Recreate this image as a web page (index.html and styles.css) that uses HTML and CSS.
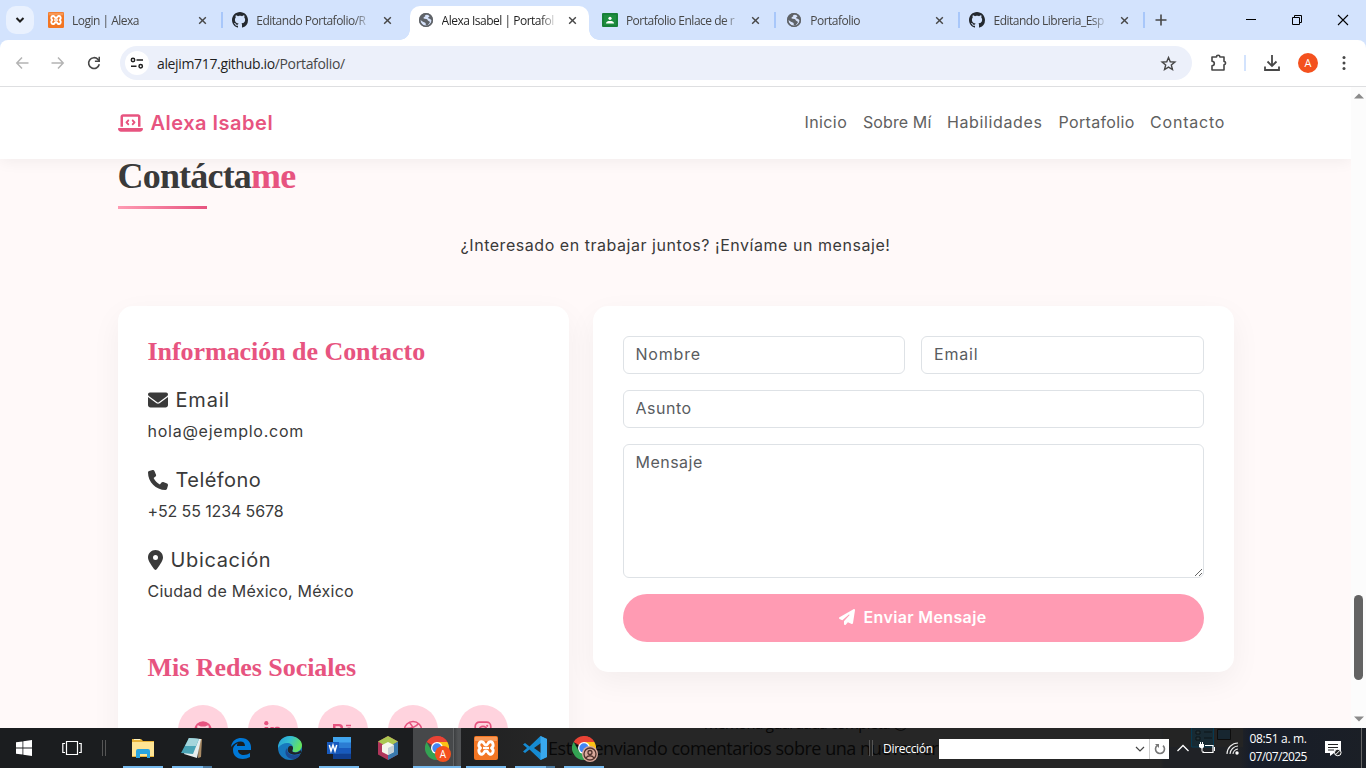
FILE: index.html
```html
<!DOCTYPE html>
<html lang="es">
<head>
<meta charset="utf-8">
<title>Alexa Isabel | Portafolio</title>
<link rel="stylesheet" href="styles.css">
</head>
<body>
<svg class="defs" aria-hidden="true">
  <symbol id="close" viewBox="0 0 10 10"><path d="M1.3 1.3l7.4 7.4M8.7 1.3L1.3 8.7" stroke="currentColor" stroke-width="1.6" fill="none"/></symbol>
  <symbol id="github" viewBox="0 0 16 16"><path d="M8 0C3.58 0 0 3.58 0 8c0 3.54 2.29 6.53 5.47 7.59.4.07.55-.17.55-.38 0-.19-.01-.82-.01-1.49-2.01.37-2.53-.49-2.69-.94-.09-.23-.48-.94-.82-1.13-.28-.15-.68-.52-.01-.53.63-.01 1.08.58 1.23.82.72 1.21 1.87.87 2.33.66.07-.52.28-.87.51-1.07-1.78-.2-3.64-.89-3.64-3.95 0-.87.31-1.59.82-2.15-.08-.2-.36-1.02.08-2.12 0 0 .67-.21 2.2.82.64-.18 1.32-.27 2-.27.68 0 1.36.09 2 .27 1.53-1.04 2.2-.82 2.2-.82.44 1.1.16 1.92.08 2.12.51.56.82 1.27.82 2.15 0 3.07-1.87 3.75-3.65 3.95.29.25.54.73.54 1.48 0 1.07-.01 1.93-.01 2.2 0 .21.15.46.55.38A8.013 8.013 0 0 0 16 8c0-4.42-3.58-8-8-8z" fill="currentColor"/></symbol>
  <symbol id="globe" viewBox="0 0 16 16"><circle cx="8" cy="8" r="7" fill="#5f6368"/><path d="M9.3 2.2C7 2.500 6.800 3.800 7.300 4.600c-1.500.1-2 .9-1.600 2 .6.700 3.700.2 3.900 1.500.1 1.100 1.700.8 2.200 1.900.2.800-.7 1.800-1.900 2.900-.6.500-1.500.6-2 .3-.4-1 .2-2-.7-2.500C5.500 10.100 4.700 9.800 2.300 7.800c-.2 2.600 1.500 5.400 4.600 6l1 .1c3.300-.2 5.800-2.700 5.900-6-.6 0-1.200-.2-1.600-.8-.7-.6-2.200-.3-2.100-1.300.1-.8 1.500-.7 1.300-1.800-.1-.7-.9-.8-2.100-1.800z" fill="#d7e3fb"/><circle cx="8" cy="8" r="6.300" fill="none" stroke="#5f6368" stroke-width="1.500"/></symbol>
  <symbol id="xampp" viewBox="0 0 24 24"><rect width="24" height="24" rx="2" fill="#f37623"/><path d="M1 1h22v4H1z" fill="#f9a66c" opacity=".7"/><path d="M8.500 6C5 5 3.500 10 6.500 12 3.500 14 5 19 8.500 18c2-.5 1-3 3.500-3s1.500 2.500 3.500 3c3.500 1 5-4 2-6 3-2 1.500-7-2-6-2 .5-1 3-3.500 3S10.500 6.500 8.500 6z" fill="none" stroke="#fff" stroke-width="2.900" stroke-linejoin="round"/><path d="M9 12h6" stroke="#fff" stroke-width="2.300"/></symbol>
  <symbol id="chrome" viewBox="0 0 24 24"><path d="M12 12L1.600 6A12 12 0 0 1 22.400 6z" fill="#e94335"/><path d="M12 0a12 12 0 0 1 10.400 6H12z" fill="#e94335"/><path d="M22.400 6A12 12 0 0 1 12 24l5.200-9L12 6z" fill="#fbc116"/><path d="M12 24A12 12 0 0 1 1.600 6l5.200 9 9.500.5z" fill="#34a353"/><circle cx="12" cy="12" r="6" fill="#fff"/><circle cx="12" cy="12" r="4.700" fill="#4285f4"/></symbol>
</svg>

<div class="tabstrip">
  <div class="tab-search"><svg width="10" height="8" viewBox="0 0 10 8"><path d="M1.500 2L5 5.500 8.500 2" fill="none" stroke="#1f1f1f" stroke-width="2"/></svg></div>
  <div class="tabs">
    <div class="tab"><svg class="fav"><use href="#xampp"/></svg><span class="tab-name">Login | Alexa</span><svg class="x"><use href="#close"/></svg></div>
    <div class="tab sep"><svg class="fav dark"><use href="#github"/></svg><span class="tab-name">Editando Portafolio/R</span><svg class="x"><use href="#close"/></svg></div>
    <div class="tab active"><svg class="fav"><use href="#globe"/></svg><span class="tab-name">Alexa Isabel | Portafol</span><svg class="x"><use href="#close"/></svg></div>
    <div class="tab late"><svg class="fav" viewBox="0 0 16 16"><rect y="1" width="16" height="14" rx="1" fill="#188038"/><path d="M2 3h12v10H2z" fill="#1e8e3e"/><circle cx="8" cy="6.300" r="1.600" fill="#fff"/><path d="M4 11.500c0-2 2-2.500 4-2.500s4 .5 4 2.500z" fill="#fff"/></svg><span class="tab-name">Portafolio Enlace de r</span><svg class="x"><use href="#close"/></svg></div>
    <div class="tab sep late"><svg class="fav"><use href="#globe"/></svg><span class="tab-name">Portafolio</span><svg class="x"><use href="#close"/></svg></div>
    <div class="tab sep"><svg class="fav dark"><use href="#github"/></svg><span class="tab-name">Editando Libreria_Esp</span><svg class="x"><use href="#close"/></svg></div>
  </div>
  <div class="new-tab"><svg width="12" height="12" viewBox="0 0 12 12"><path d="M6 .5v11M.5 6h11" stroke="#474747" stroke-width="1.600"/></svg></div>
  <div class="window-btns">
    <svg width="12" height="12" viewBox="0 0 12 12"><path d="M1 5.500h10" stroke="#000"/></svg>
    <svg width="12" height="12" viewBox="0 0 12 12"><path d="M1.500 3.500h7v7h-7zM3.500 3.500v-2h7v7h-2" fill="none" stroke="#000"/></svg>
    <svg width="12" height="12" viewBox="0 0 12 12"><path d="M1 1l10 10M11 1L1 11" stroke="#000" stroke-width="1.100"/></svg>
  </div>
</div>

<div class="toolbar">
  <div class="nav-btns">
    <svg width="14" height="14" viewBox="0 0 14 14"><path d="M7 1.500L1.800 7 7 12.500M2 7h11.500" fill="none" stroke="#b4b4b4" stroke-width="1.500"/></svg>
    <svg width="14" height="14" viewBox="0 0 14 14"><path d="M7 1.500L12.200 7 7 12.500M12 7H.5" fill="none" stroke="#b4b4b4" stroke-width="1.500"/></svg>
    <svg width="14" height="14" viewBox="0 0 14 14"><path d="M12.300 8.300A5.400 5.400 0 1 1 11 3.400L12.400 5" fill="none" stroke="#474747" stroke-width="1.600"/><path d="M13 .8v5.100H7.900V4.400h3.600V.8z" fill="#474747"/></svg>
  </div>
  <div class="omnibox">
    <div class="site-info"><svg width="14" height="12" viewBox="0 0 14 12"><g fill="none" stroke="#1f1f1f" stroke-width="1.500"><circle cx="3" cy="3" r="1.700"/><path d="M6.500 3H13M1 9.200h5.500"/><circle cx="10.700" cy="9.200" r="1.700"/></g></svg></div>
    <div class="url"><span>alejim717.github.io</span>/Portafolio/</div>
    <svg class="star" viewBox="0 0 24 24"><path d="M12 3.500l2.500 6 6.500.5-5 4.200 1.600 6.400L12 17.200l-5.600 3.400L8 14.200 3 10l6.500-.5z" fill="none" stroke="#474747" stroke-width="2"/></svg>
  </div>
  <div class="tool-icons">
    <svg width="18" height="18" viewBox="0 0 18 18"><path d="M2 3h4.500a1.700 1.700 0 0 1 3.400 0H14v4.500a1.600 1.600 0 0 1 0 3.200V16H2v-4.200c1.500 0 2.300-1 2.300-2.200S3.500 7.300 2 7.300z" fill="none" stroke="#474747" stroke-width="1.600" stroke-linejoin="round"/></svg>
    <i class="tool-sep"></i>
    <svg width="18" height="18" viewBox="0 0 18 18"><path d="M9 1v11M4.500 7.500L9 12l4.500-4.500M2 12.500V16h14v-3.500" fill="none" stroke="#474747" stroke-width="1.800"/></svg>
    <span class="avatar">A</span>
    <svg class="menu" width="4" height="16" viewBox="0 0 4 16"><g fill="#474747"><circle cx="2" cy="2.500" r="1.500"/><circle cx="2" cy="8" r="1.500"/><circle cx="2" cy="13.500" r="1.500"/></g></svg>
  </div>
</div>

<div class="viewport">
  <div class="page">
    <nav class="navbar">
      <div class="brand"><svg width="25" height="20" viewBox="0 0 640 512"><path fill="currentColor" d="M64 96c0-35.300 28.700-64 64-64H512c35.300 0 64 28.700 64 64V352H512V96H128V352H64V96zM0 403.200C0 392.600 8.600 384 19.200 384H620.800c10.600 0 19.200 8.600 19.200 19.200c0 42.400-34.400 76.800-76.800 76.800H76.800C34.400 480 0 445.600 0 403.200zM281 209l-31 31 31 31c9.400 9.400 9.400 24.600 0 33.900s-24.600 9.400-33.900 0l-48-48c-9.400-9.400-9.400-24.600 0-33.900l48-48c9.400-9.400 24.600-9.400 33.900 0s9.400 24.600 0 33.900zM393 175l48 48c9.400 9.400 9.400 24.600 0 33.900l-48 48c-9.400 9.400-24.600 9.400-33.900 0s-9.400-24.600 0-33.900l31-31-31-31c-9.400-9.400-9.400-24.600 0-33.900s24.600-9.400 33.900 0z"/></svg><span>Alexa Isabel</span></div>
      <div class="links"><a class="l-inicio">Inicio</a><a class="l-sobre">Sobre Mí</a><a class="l-hab">Habilidades</a><a class="l-port">Portafolio</a><a class="l-cont">Contacto</a></div>
    </nav>
    <main class="contact">
      <h2 class="title">Contácta<span>me</span></h2>
      <p class="lead">¿Interesado en trabajar juntos? ¡Envíame un mensaje!</p>
      <div class="cols">
        <section class="card info">
          <h3 class="h-info">Información de Contacto</h3>
          <div class="item"><h5><svg width="20" height="20" viewBox="0 0 512 512"><path d="M48 64C21.500 64 0 85.500 0 112c0 15.100 7.100 29.300 19.200 38.400L236.800 313.600c11.400 8.500 27 8.500 38.400 0L492.800 150.400c12.100-9.100 19.200-23.300 19.200-38.400c0-26.500-21.500-48-48-48H48zM0 176V384c0 35.300 28.700 64 64 64H448c35.300 0 64-28.700 64-64V176L294.400 339.200c-22.800 17.100-54 17.100-76.800 0L0 176z"/></svg><span class="t-mail">Email</span></h5><p class="p-mail">hola@ejemplo.com</p></div>
          <div class="item"><h5><svg width="20" height="20" viewBox="0 0 512 512"><path d="M164.900 24.600c-7.700-18.600-28-28.500-47.400-23.200l-88 24C12.100 30.200 0 46 0 64C0 311.400 200.600 512 448 512c18 0 33.800-12.100 38.600-29.500l24-88c5.300-19.400-4.600-39.700-23.200-47.400l-96-40c-16.300-6.800-35.200-2.100-46.300 11.600L304.700 368C234.300 334.700 177.300 277.700 144 207.300L193.300 167c13.700-11.200 18.400-30 11.600-46.300l-40-96z"/></svg><span class="t-tel">Teléfono</span></h5><p class="p-tel">+52 55 1234 5678</p></div>
          <div class="item"><h5><svg width="15" height="20" viewBox="0 0 384 512"><path d="M215.700 499.200C267 435 384 279.400 384 192C384 86 298 0 192 0S0 86 0 192c0 87.400 117 243 168.300 307.200c12.300 15.300 35.100 15.300 47.400 0zM192 128a64 64 0 1 1 0 128 64 64 0 1 1 0-128z"/></svg><span class="t-ubi">Ubicación</span></h5><p class="p-ubi">Ciudad de México, México</p></div>
          <h3 class="h-redes">Mis Redes Sociales</h3>
          <div class="social">
            <span><svg viewBox="0 0 20 20"><circle cx="10" cy="10" r="8.700" fill="currentColor"/><path d="M4.500 5.500c1.700-.2 2.700.7 3.200 1h4.600c.5-.3 1.500-1.200 3.200-1 .5 1.500.2 2.500 0 3 1.500 3.500-.5 6-5.500 6s-7-2.500-5.500-6c-.2-.5-.5-1.500 0-3z" fill="#ffd3de"/></svg></span>
            <span><svg viewBox="0 0 20 20"><circle cx="3.300" cy="3.200" r="2.100" fill="currentColor"/><path d="M1.600 7h3.600v11H1.600zM7.400 7h3.400v1.500c2-3 7.700-2.500 7.700 3V18H15v-6c0-3-4-3-4 0v6H7.400z" fill="currentColor"/></svg></span>
            <span><svg viewBox="0 0 20 20"><path d="M0 4h6c5 0 5 5 2 6 4 1 3.500 7-2 7H0zM2.500 6.200v3H6c2 0 2-3 0-3zM2.500 11v3.700H6c2.500 0 2.500-3.700 0-3.700z" fill="currentColor" fill-rule="evenodd"/><path d="M13 5.500h5" stroke="currentColor" stroke-width="1.500"/><path d="M12.500 13h7c0-6-7-6-7 0 0 5 6 4 7 1.500" fill="none" stroke="currentColor" stroke-width="2"/></svg></span>
            <span><svg viewBox="0 0 20 20"><g fill="none" stroke="currentColor" stroke-width="1.500"><circle cx="10" cy="10" r="8.600"/><path d="M6.500 2.500c3.500 4 5.500 9 6.500 15M1.500 8.500c6 .2 11-1 14-5M4 16c2.500-5 8-6.500 14.500-5"/></g></svg></span>
            <span><svg viewBox="0 0 20 20"><rect x="2.200" y="2.200" width="15.600" height="15.600" rx="4.200" fill="none" stroke="currentColor" stroke-width="1.700"/><circle cx="10" cy="10" r="3.700" fill="none" stroke="currentColor" stroke-width="1.700"/><circle cx="14.200" cy="5.800" r="1.100" fill="currentColor"/></svg></span>
          </div>
        </section>
        <form class="card form">
          <div class="pair"><input type="text" placeholder="Nombre"><input type="text" placeholder="Email"></div>
          <input class="subject" type="text" placeholder="Asunto">
          <textarea placeholder="Mensaje"></textarea>
          <button type="button"><svg width="16" height="16" viewBox="0 0 512 512"><path fill="#fff" d="M498.100 5.600c10.100 7 15.400 19.100 13.500 31.200l-64 416c-1.500 9.700-7.400 18.200-16 23s-18.900 5.400-28 1.600L284 427.700l-68.500 74.100c-8.900 9.700-22.900 12.900-35.200 8.100S160 493.200 160 480V396.400c0-4 1.500-7.800 4.200-10.700L331.800 202.800c5.800-6.300 5.600-16-.4-22s-15.700-6.400-22-.7L106 360.800 17.700 316.600C7.100 311.300 .3 300.700 0 288.900s5.900-22.800 16.100-28.700l448-256c10.700-6.100 23.900-5.500 34 1.400z"/></svg><span>Enviar Mensaje</span></button>
        </form>
      </div>
    </main>
  </div>
  <div class="scrollbar"><svg width="10" height="6" viewBox="0 0 10 6"><path d="M0 5.500L5 .5l5 5z" fill="#8a8a8a"/></svg><i></i><svg width="10" height="6" viewBox="0 0 10 6"><path d="M0 .5l5 5 5-5z" fill="#8a8a8a"/></svg></div>
</div>

<div class="taskbar">
  <div class="ghost ghost-main">Estás enviando comentarios sobre una nueva vers</div>
  <div class="ghost ghost-top">memoria guardada completa ⓘ</div>
  <div class="ghost ghost-low">Está</div>
  <svg class="ghost-panel" width="80" height="20" viewBox="0 0 80 20"><path d="M0 0h80v19H0z" fill="#242424"/><path d="M28.500-1h22v20h-22z" fill="#182a33" stroke="#063a52"/><path d="M33 3h4v3h-4zM33 9h4v3h-4zM41 4h8M41 10h8" stroke="#0c1418" fill="#28363b"/><path d="M54.500 1.500h13v10h-13z" fill="#172630" stroke="#0d0d0d"/></svg>
  <div class="start"><svg width="16" height="16" viewBox="0 0 16 16"><path d="M0 2.300L6.500 1.400v6.200H0zM7.300 1.300L16 0v7.600H7.300zM0 8.400h6.500v6.200L0 13.700zM7.300 8.400H16V16l-8.700-1.300z" fill="#fff"/></svg></div>
  <div class="start"><svg width="20" height="14" viewBox="0 0 20 14"><path d="M4.500.5h11v13h-11zM3 2.500H.8v9H3M17 2.500h2.200v9H17" fill="none" stroke="#fff" stroke-width="1.200"/></svg></div>
  <div class="grip"></div>
  <div class="apps">
    <div class="app on"><svg viewBox="0 0 24 24"><path d="M1 3h9l2 2h11v16H1z" fill="#e8b339"/><path d="M1 6h22v14H1z" fill="#ffe594"/><path d="M3 3.500h6" stroke="#fff3c2"/><path d="M5 22v-7q0-2 2-2h10q2 0 2 2v7h-3v-4H9v4z" fill="#2ba5df"/></svg></div>
    <div class="app on more"><svg viewBox="0 0 24 24"><path d="M19 3h3l-1 18-3 1z" fill="#a98b65"/><path d="M9 2l12 1-4 19-13-4z" fill="#e7eeee"/><path d="M9 2l10 1-6 15L1 17z" fill="#4aa4b6"/><path d="M9 2l10 1-3 7H5z" fill="#a5d6dc"/></svg></div>
    <div class="app"><svg viewBox="0 0 24 24"><path d="M2 11C3 4 8 2 12 2c7 0 10 5 10 9v3H9c0 6 8 6 12 3v4c-7 4-17 2-17-7 0-4 3-6 5-7-1 1-1 2-1 3h8c0-6-8-6-14 1z" fill="#0078d7"/></svg></div>
    <div class="app"><svg viewBox="0 0 24 24"><defs><linearGradient id="eg" x2="1" y2=".4"><stop stop-color="#259bd8"/><stop offset=".5" stop-color="#35bfd0"/><stop offset="1" stop-color="#65e35e"/></linearGradient></defs><circle cx="12" cy="12" r="12" fill="#1778bd"/><path d="M0 12C0 4 6 0 12 0s12 4 12 9-5 8-8 7c-3-.7-1-2-1-4 0-6-10-7-15 0z" fill="url(#eg)"/><path d="M9 12c-4 5 0 12 8 11 3-1 5-3 5-5-7 3-14 0-13-6z" fill="#1c4a91"/><path d="M15 12c0 2-1.500 3 0 4 4 1.500 7-1 8-2v3c-8 4-15 0-13-5 1-3 5-3 5 0z" fill="#20242a"/></svg></div>
    <div class="app on"><svg viewBox="0 0 24 24"><path d="M6 1h18v22H6z" fill="#2b7cd3"/><path d="M6 1h18v5.500H6z" fill="#41a5ee"/><path d="M6 12h18v5.500H6z" fill="#185abd"/><path d="M6 17.500h18V23H6z" fill="#103f91"/><path d="M0 6h12v12H0z" fill="#185abd"/><path d="M2.300 9l1.700 6 2-6 2 6 1.700-6" fill="none" stroke="#fff" stroke-width="1.500"/></svg></div>
    <div class="app"><svg viewBox="0 0 24 24"><path d="M12 0l10 5.500v13L12 24 2 18.500v-13z" fill="#b1365b"/><path d="M12 0l10 5.500-10 6L2 5.500z" fill="#abc751"/><path d="M22 5.500v13L12 24V11.500z" fill="#3979ad"/><path d="M12 6l6 3v7l-6 3-6-3V9z" fill="#f4f6ec"/><path d="M12 12l6-3v7l-6 3z" fill="#c6d1d5"/></svg></div>
    <div class="app on current"><svg viewBox="0 0 24 24"><use href="#chrome"/></svg><b class="badge">A</b></div>
    <div class="app on"><svg viewBox="0 0 24 24"><use href="#xampp"/></svg></div>
    <div class="app on more"><svg viewBox="0 0 24 24"><path d="M17.500 0L24 3v18l-6.500 3L6.500 13.500 2 17l-2-1.500L4 12 0 8.500 2 7l4.500 3.500zM18 7l-7 5 7 5z" fill="#168bd2"/><path d="M17.500 0L24 3v18l-6.500 3z" fill="#39a8ed"/></svg></div>
    <div class="app on"><svg viewBox="0 0 24 24"><use href="#chrome"/></svg><b class="badge user"><svg viewBox="0 0 16 16"><g fill="none" stroke="#50332d" stroke-width="1.300"><circle cx="8" cy="8" r="6"/><circle cx="8" cy="6.500" r="2"/><path d="M4 12c1.500-3 6.500-3 8 0"/></g></svg></b></div>
  </div>
  <div class="tray">
    <div class="grip small"></div>
    <span class="dir">Dirección</span>
    <div class="addr"><svg width="10" height="8" viewBox="0 0 10 8"><path d="M1 2l4 4 4-4" fill="none" stroke="#444" stroke-width="1.200"/></svg><i><svg width="12" height="12" viewBox="0 0 12 12"><path d="M9 2.600A4.500 4.500 0 1 1 3 2.600" fill="none" stroke="#777" stroke-width="1.600"/><path d="M1 1h4v4z" fill="#777"/></svg></i></div>
    <svg class="t-up" width="12" height="8" viewBox="0 0 12 8"><path d="M.5 7L6 1.500 11.500 7" fill="none" stroke="#fff" stroke-width="1.300"/></svg>
    <svg class="t-bat" width="16" height="12" viewBox="0 0 16 12"><path d="M6 3.500h8v7H4V9" fill="none" stroke="#fff" stroke-width="1.200"/><path d="M15 5h1v4h-1zM0 2h5v3L3.500 6.500v3h-1v-3L0 5zM1 0h1v2H1zM3 0h1v2H3z" fill="#fff"/></svg>
    <svg class="t-wifi" width="13" height="13" viewBox="0 0 13 13"><g fill="none" stroke="#eee" stroke-width="1.100"><path d="M1 12C1 6 6 1 12 1M4 12c0-4 4-8 8-8M7 12c0-2 2-5 5-5"/></g><circle cx="11" cy="11" r="1.700" fill="#fff"/></svg>
    <div class="clock"><span>08:51 a. m.</span><span class="date">07/07/2025</span></div>
    <svg class="t-note" width="17" height="17" viewBox="0 0 17 17"><path d="M0 1h16v12H9l-4 3v-3H0z" fill="#fff"/><path d="M3 4.500h10M3 7.500h10M3 10h6" stroke="#222"/><circle cx="12.800" cy="12.500" r="3.300" fill="#222" stroke="#fff"/><path d="M10.500 14.800l4.600-4.600" stroke="#fff"/></svg>
    <i class="desk"></i>
  </div>
</div>
</body>
</html>
```

FILE: styles.css
```css
* { box-sizing: border-box; }
body { margin: 0; width: 1366px; height: 768px; overflow: hidden; display: flex; flex-direction: column; background: #fff; font-family: "Open Sans", sans-serif; }
svg { display: block; flex: none; }
.defs { position: absolute; width: 0; height: 0; }
h2, h3, h5, p { margin: 0; }

/* browser tabs */
.tabstrip { height: 40px; background: #d3e3fd; display: flex; align-items: flex-start; }
.tab-search { width: 28px; height: 28px; margin: 6px 3px 0 6px; border-radius: 10px; background: #e9f1fe; display: flex; align-items: center; justify-content: center; }
.tabs { display: grid; grid-template-columns: repeat(6, 184.300px); height: 40px; }
.tab { position: relative; display: flex; align-items: center; height: 40px; padding: 0 14px 0 11px; font-size: 12px; color: #474747; }
.tab.late { padding-left: 12px; }
.tab.sep::before { content: ""; position: absolute; left: 0; top: 12px; width: 2px; height: 16px; background: #a8c7fa; }
.fav { width: 16px; height: 16px; margin-right: 8px; }
.fav.dark { color: #24292f; }
.tab-name { width: 114px; flex: none; margin-right: auto; white-space: nowrap; letter-spacing: -.5px; -webkit-mask-image: linear-gradient(90deg, #000 86%, transparent 101%); }
.x { width: 9px; height: 9px; color: #474747; }
.tab.active { height: 34px; margin: 6px 1px 0 4px; padding: 0 12px 6px 8px; background: #fff; border-radius: 10px 10px 0 0; color: #1f1f1f; }
.tab.active::before, .tab.active::after { content: ""; position: absolute; bottom: 0; width: 10px; height: 10px; }
.tab.active::before { left: -10px; background: radial-gradient(circle at 0 0, transparent 9.500px, #fff 10px); }
.tab.active::after { right: -10px; background: radial-gradient(circle at 100% 0, transparent 9.500px, #fff 10px); }
.new-tab { height: 40px; padding-left: 10px; display: flex; align-items: center; border-left: 2px solid transparent; border-image: linear-gradient(transparent 30%, #a8c7fa 30%, #a8c7fa 70%, transparent 70%) 1; }
.window-btns { margin-left: auto; height: 40px; padding-right: 17px; display: flex; align-items: center; gap: 34px; }

/* toolbar */
.toolbar { height: 47px; background: linear-gradient(#fff, #fff) padding-box, #d3e3fd; border-bottom: 1px solid #dedfe1; border-radius: 8px 8px 0 0; display: flex; align-items: center; box-shadow: 0 -8px 0 #d3e3fd; clip-path: inset(0); }
.nav-btns { display: flex; gap: 22px; padding-left: 15px; width: 120px; }
.omnibox { width: 1072px; height: 34px; border-radius: 17px; background: #ecf0fa; display: flex; align-items: center; padding: 0 15px 0 5px; }
.site-info { width: 24px; height: 24px; border-radius: 12px; background: #fff; display: flex; align-items: center; justify-content: center; }
.url { flex: 1; margin-left: 8px; font-size: 14px; letter-spacing: -.35px; color: #474747; }
.url span { color: #1f1f1f; }
.star { width: 17px; height: 17px; }
.tool-icons { display: flex; align-items: center; padding-left: 18px; }
.tool-sep { width: 2px; height: 16px; background: #d3e3fd; margin: 0 17px 0 16px; }
.avatar { width: 20px; height: 20px; border-radius: 50%; background: #f4511e; color: #fff; font-size: 11px; line-height: 20px; text-align: center; margin: 0 24px 0 17px; }

/* page */
.viewport { height: 641px; display: flex; }
.page { width: 1351px; height: 641px; overflow: hidden; background: #fff9f9; color: #3a3a3a; font-family: Inter, "Open Sans", sans-serif; font-size: 16px; }
.navbar { position: relative; height: 72px; background: #fff; box-shadow: 0 2px 15px rgba(0,0,0,.06); display: flex; align-items: center; justify-content: space-between; padding: 0 125.500px 0 117.500px; }
.brand { display: flex; align-items: center; gap: 8px; color: #e75480; font-size: 20px; font-weight: 600; letter-spacing: .5px; }
.links { display: grid; grid-template-columns: 42.500px 68px 95.500px 75.500px 75.500px; gap: 16px; color: #606060; padding-bottom: 2px; }
.links a { white-space: nowrap; }
.l-inicio { letter-spacing: .4px; }
.l-sobre { letter-spacing: .1px; }
.l-hab { letter-spacing: .62px; }
.l-port { letter-spacing: .35px; }
.l-cont { letter-spacing: .8px; }
.contact { padding: 0 117.500px; }
.title { position: relative; height: 50px; font-family: "Liberation Serif", serif; font-size: 36px; line-height: 34px; letter-spacing: -.8px; font-weight: 700; }
.title span { color: #e75480; }
.title::after { content: ""; display: block; width: 89px; height: 3px; margin-top: 13px; background: linear-gradient(90deg, #ff9bb3, #e75480); }
.lead { text-align: center; line-height: 24px; margin: 24px 0 49px; letter-spacing: .54px; }
.cols { display: grid; grid-template-columns: 451.500px 641px; gap: 23.500px; align-items: start; }
.card { background: #fff; border-radius: 15px; box-shadow: 0 10px 30px rgba(0,0,0,.05); padding: 30px; }
.info { height: 480px; }
h3 { font-family: "Liberation Serif", serif; font-size: 26px; line-height: 31px; font-weight: 700; letter-spacing: -.05px; color: #e75480; }
.item { height: 80px; }
.h-info { margin-bottom: 16px; }
h5 { display: flex; align-items: center; gap: 8px; height: 34px; font-size: 20px; font-weight: 400; }
h5 svg { fill: #3a3a3a; }
.t-mail { letter-spacing: .8px; }
.t-tel { letter-spacing: .45px; }
.t-ubi { letter-spacing: .65px; }
.item p { line-height: 28px; }
.p-mail { letter-spacing: .75px; }
.p-tel { letter-spacing: -.12px; }
.p-ubi { letter-spacing: .25px; }
.h-redes { margin-top: 29px; }
.social { display: flex; gap: 20px; padding: 22px 0 0 30px; }
.social span { width: 50px; height: 50px; border-radius: 25px; background: #ffd3de; color: #e75480; display: flex; align-items: center; justify-content: center; }
.social svg { width: 20px; height: 20px; }
.form { display: flex; flex-direction: column; gap: 16px; }
.pair { display: grid; grid-template-columns: 1fr 1fr; gap: 16px; }
input, textarea { width: 100%; height: 38px; border: 1px solid #dee2e6; border-radius: 6px; padding: 5px 12px 7px; font: 16px/24px Inter, sans-serif; letter-spacing: .8px; color: #3a3a3a; background: #fff; outline: 0; }
.subject { letter-spacing: .5px; }
textarea { height: 134px; resize: vertical; display: block; letter-spacing: .48px; }
::placeholder { color: #595c5f; opacity: 1; }
button { height: 48px; border: 0; border-radius: 24px; background: #ff9bb3; color: #fff; font: 600 16px Inter, sans-serif; letter-spacing: .36px; padding-bottom: 3px; display: flex; align-items: center; justify-content: center; gap: 8px; }
.scrollbar { width: 15px; background: #fcfcfc; display: flex; flex-direction: column; align-items: center; padding: 6px 0 6px; }
.scrollbar i { width: 9px; height: 85px; border-radius: 5px; background: #636363; margin: 496px 0 auto; }

/* taskbar */
.taskbar { position: relative; height: 40px; background: linear-gradient(90deg, #1b1d1f 0, #1b1d1f 410px, #262626 545px, #262626 1160px, #202226 1164px, #202226 1240px, #171d29 1250px, #1b1f26 1366px); display: flex; color: #fff; overflow: hidden; }
.ghost { position: absolute; color: #080808; white-space: nowrap; font-family: "Open Sans", sans-serif; }
.ghost-main { left: 548px; top: 7px; font-size: 18px; line-height: 26px; letter-spacing: -.47px; }
.ghost-top { left: 704px; top: -14px; font-size: 15px; line-height: 18px; letter-spacing: -.7px; }
.ghost-low { left: 1015px; top: 36px; font-size: 15px; line-height: 18px; font-weight: 700; }
.ghost-panel { position: absolute; left: 1163px; top: 0; }
.start { width: 48px; display: flex; align-items: center; justify-content: center; }
.grip { width: 4px; height: 16px; margin: 12px 0 0 6px; border: solid #555; border-width: 0 1px; }
.apps { position: relative; display: flex; padding-left: 12px; }
.app { position: relative; width: 49px; display: flex; align-items: center; justify-content: center; }
.app > svg { width: 24px; height: 24px; }
.app.on::after { content: ""; position: absolute; left: 5px; bottom: 0; width: 40px; height: 2px; background: #76b9ed; }
.app.more::after { background: linear-gradient(90deg, #76b9ed 31px, #4c7aa0 31px); }
.app.current { background: linear-gradient(90deg, #46484a 40px, #606264 40px, #606264 41px, #3c3e40 41px, #505254 45px) no-repeat 1px 0 / 48px 40px; }
.app.current::after { left: 1px; width: 48px; }
.badge { position: absolute; left: 23px; top: 18px; width: 16px; height: 16px; border-radius: 8px; background: #f4511e; font-size: 10px; line-height: 16px; font-weight: 400; text-align: center; }
.badge.user { background: #d9a99c; }
.tray { position: relative; margin-left: auto; display: flex; align-items: center; font-size: 12px; }
.grip.small { margin: 0 10px 0 0; }
.dir { width: 56px; letter-spacing: -.3px; }
.addr { width: 230px; height: 20px; margin-top: 2px; background: #fff; display: flex; align-items: center; justify-content: flex-end; gap: 4px; }
.addr i { width: 20px; height: 20px; border-left: 1px solid #ccc; display: flex; align-items: center; justify-content: center; }
.t-up { margin-left: 8px; }
.t-bat { margin-left: 10px; }
.t-wifi { margin-left: 11px; }
.clock { width: 64px; margin-left: 7px; display: flex; flex-direction: column; text-align: center; line-height: 18px; letter-spacing: -.35px; }
.date { letter-spacing: -.6px; }
.t-note { margin: 0 19px 0 15px; }
.desk { width: 1px; height: 40px; background: #666; margin-right: 4px; }
```
